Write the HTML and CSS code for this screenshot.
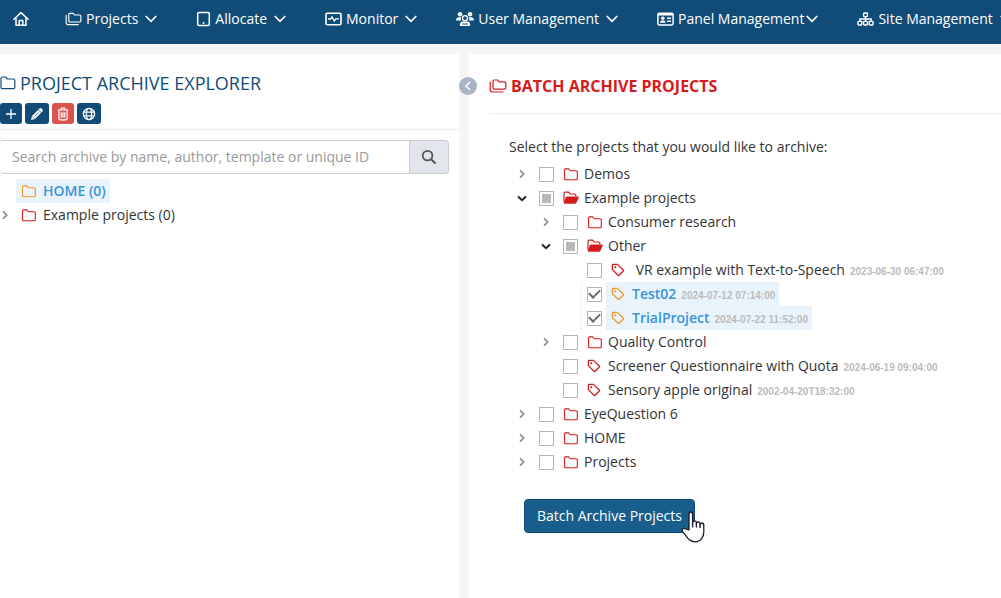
FILE: index.html
```
<!DOCTYPE html>
<html lang="en">
<head>
  <meta charset="UTF-8" />
  <meta name="viewport" content="width=device-width, initial-scale=1.0" />
  <title>Project Archive Explorer</title>
  <link rel="stylesheet" href="styles.css">
</head>
<body>

<svg class="sprite" aria-hidden="true">
  <symbol id="folder" viewBox="0 0 16 14">
    <path d="M1 2.2Q1 1 2.2 1H5.6L7.4 3H13.4Q14.8 3 14.8 4.4V11.2Q14.8 12.6 13.4 12.6H2.4Q1 12.6 1 11.2Z" fill="none" stroke="currentColor" stroke-width="1.2"/>
  </symbol>
  <symbol id="folder-open" viewBox="0 0 16 14">
    <path d="M1 11V2.4Q1 1.2 2.2 1.2H5.4L7.2 3H11.6Q12.8 3 12.8 4.2V5.6" fill="none" stroke="currentColor" stroke-width="1.2"/>
    <path d="M4 5.6H15.2Q16 5.6 15.7 6.4L13.6 11.4Q13 12.8 11.6 12.8H1.6Q.6 12.8 .9 11.8L2.6 6.8Q3 5.6 4 5.6Z" fill="currentColor"/>
  </symbol>
  <symbol id="folders" viewBox="0 0 18 14">
    <path d="M4 2.2Q4 1 5.2 1H8.6L10.2 2.8H15.4Q16.8 2.8 16.8 4.2V8.8Q16.8 10.2 15.4 10.2H5.4Q4 10.2 4 8.8Z" fill="none" stroke="currentColor" stroke-width="1.2"/>
    <path d="M1.2 3V10.6Q1.2 13 3.6 13H14" fill="none" stroke="currentColor" stroke-width="1.2" stroke-linecap="round"/>
  </symbol>
  <symbol id="tag" viewBox="0 0 14 14">
    <path d="M1.4 2.2Q1.4 1.4 2.2 1.4H6.4L12.2 7Q12.8 7.6 12.2 8.2L8.2 12.2Q7.6 12.8 7 12.2L1.4 6.6Z" fill="none" stroke="currentColor" stroke-width="1.3" stroke-linejoin="round"/>
    <circle cx="4.3" cy="4.3" r="1" fill="currentColor"/>
  </symbol>
  <symbol id="right" viewBox="0 0 8 10">
    <path d="M2 1.2L5.8 5L2 8.8" fill="none" stroke="currentColor" stroke-width="1.6"/>
  </symbol>
  <symbol id="down" viewBox="0 0 12 8">
    <path d="M1.2 1.5L6 6.3L10.8 1.5" fill="none" stroke="currentColor" stroke-width="1.7" stroke-linecap="round"/>
  </symbol>
  <symbol id="down-bold" viewBox="0 0 10 7">
    <path d="M1 1.4L5 5.2L9 1.4" fill="none" stroke="currentColor" stroke-width="2"/>
  </symbol>
</svg>

<nav class="topbar">
  <a href="#" class="nav-item home" aria-label="Home">
    <svg width="16" height="16" viewBox="0 0 16 16" fill="none" stroke="currentColor" stroke-width="1.5" stroke-linejoin="round" stroke-linecap="round"><path d="M.9 8.2L8 1.6L15.1 8.2M3 7V14.2H13V7M6.2 14V9.4H9.8V14"/></svg>
  </a>
  <a href="#" class="nav-item">
    <svg width="17" height="14"><use href="#folders"/></svg>
    Projects
    <svg class="caret" width="12" height="8"><use href="#down"/></svg>
  </a>
  <a href="#" class="nav-item">
    <svg width="15" height="16" viewBox="0 0 15 16"><rect x="1.7" y="1.5" width="11.6" height="13" rx="1.3" fill="none" stroke="currentColor" stroke-width="1.5"/><circle cx="7.5" cy="12" r="1" fill="currentColor"/></svg>
    Allocate
    <svg class="caret" width="12" height="8"><use href="#down"/></svg>
  </a>
  <a href="#" class="nav-item">
    <svg width="17" height="14" viewBox="0 0 17 14" fill="none" stroke="currentColor"><rect x="1" y="1.2" width="15" height="11.6" rx="1.2" stroke-width="1.6"/><path d="M3 7H5.6L7 4.8L9.2 9L10.8 6.8H14" stroke-width="1.3"/></svg>
    Monitor
    <svg class="caret" width="12" height="8"><use href="#down"/></svg>
  </a>
  <a href="#" class="nav-item">
    <svg width="18" height="16" viewBox="0 0 18 16" fill="currentColor"><circle cx="4" cy="3.2" r="2.3"/><circle cx="14" cy="3.2" r="2.3"/><path d="M0 9.4Q.2 6.2 3 6.2H5.2Q4 8 5.2 9.4ZM18 9.4Q17.8 6.2 15 6.2H12.8Q14 8 12.8 9.4Z"/><circle cx="9" cy="7.2" r="2.5" fill="none" stroke="currentColor" stroke-width="1.3"/><path d="M3.8 14.9Q3.6 10.6 7 10.6H11Q14.4 10.6 14.2 14.9Z"/><path d="M6.2 13H11.8" stroke="#114c78"/></svg>
    User Management
    <svg class="caret" width="12" height="8"><use href="#down"/></svg>
  </a>
  <a href="#" class="nav-item tight">
    <svg width="17" height="14" viewBox="0 0 17 14"><rect x=".9" y="1.2" width="15.2" height="11.8" rx="1.4" fill="none" stroke="currentColor" stroke-width="1.5"/><path d="M1 1H16V3.6H1ZM3 10.8Q3 8.4 5 8.4H6.8Q8.6 8.4 8.6 10.8Z" fill="currentColor"/><circle cx="5.8" cy="6.2" r="1.8" fill="currentColor"/><path d="M10 6.2H14M10 9.2H14" stroke="currentColor" stroke-width="1.6"/></svg>
    Panel Management
    <svg class="caret" width="12" height="8"><use href="#down"/></svg>
  </a>
  <a href="#" class="nav-item">
    <svg width="17" height="14" viewBox="0 0 17 14" fill="none" stroke="currentColor" stroke-width="1.4"><rect x="6.6" y="1" width="3.8" height="3.6" rx=".7"/><rect x="1" y="9.4" width="3.8" height="3.6" rx=".7"/><rect x="6.6" y="9.4" width="3.8" height="3.6" rx=".7"/><rect x="12.2" y="9.4" width="3.8" height="3.6" rx=".7"/><path d="M8.5 4.6V9.4M2.9 9.4V7H14.1V9.4"/></svg>
    Site Management
    <svg class="caret" width="12" height="8"><use href="#down"/></svg>
  </a>
</nav>

<div class="layout">
  <aside class="explorer">
    <h1><svg width="16" height="14"><use href="#folder"/></svg>PROJECT ARCHIVE EXPLORER</h1>
    <div class="tools">
      <button class="tool" aria-label="Add"><svg width="12" height="12" viewBox="0 0 12 12"><path d="M6 1V11M1 6H11" stroke="currentColor" stroke-width="1.3"/></svg></button>
      <button class="tool wide" aria-label="Edit"><svg width="14" height="14" viewBox="0 0 14 14"><path d="M1 13L2 9L9.6 1.4Q10.6.6 11.6 1.6L12.4 2.4Q13.4 3.4 12.4 4.4L5 12Z" fill="currentColor"/><path d="M8.4 2.8L11.2 5.6M4.5 9.5L8.6 5.4M2.3 9.6L4.4 11.7" stroke="#114c78" stroke-width=".8"/></svg></button>
      <button class="tool danger" aria-label="Delete"><svg width="12" height="14" viewBox="0 0 12 14" fill="none" stroke="currentColor" stroke-width="1.2"><path d="M.8 3H11.2M3.6 2.8L4.4 1.2H7.6L8.4 2.8M1.9 3.2V11.2Q1.9 12.8 3.4 12.8H8.6Q10.1 12.8 10.1 11.2V3.2M4.2 5.2V10.8M6 5.2V10.8M7.8 5.2V10.8"/></svg></button>
      <button class="tool wide" aria-label="Language"><svg width="14" height="14" viewBox="0 0 14 14" fill="none" stroke="currentColor" stroke-width="1.3"><circle cx="7" cy="7" r="5.6"/><ellipse cx="7" cy="7" rx="2.6" ry="5.6"/><path d="M1.8 5.2H12.2M1.8 8.8H12.2"/></svg></button>
    </div>
    <form class="search">
      <input type="text" aria-label="Search archive" placeholder="Search archive by name, author, template or unique ID">
      <button type="button" aria-label="Search"><svg width="16" height="16" viewBox="0 0 16 16"><circle cx="6.6" cy="6.6" r="4.8" fill="none" stroke="currentColor" stroke-width="1.8"/><path d="M10.2 10.2L14.6 14.6" stroke="currentColor" stroke-width="2"/></svg></button>
    </form>
    <ul class="folders">
      <li><span class="toggle"></span><a href="#" class="node selected"><svg width="16" height="13"><use href="#folder"/></svg>HOME (0)</a></li>
      <li><button class="toggle" aria-label="Expand"><svg width="8" height="10"><use href="#right"/></svg></button><a href="#" class="node"><svg width="16" height="13"><use href="#folder"/></svg>Example projects (0)</a></li>
    </ul>
  </aside>

  <div class="divider">
    <button class="collapse" aria-label="Collapse"><svg width="8" height="10" viewBox="0 0 8 10"><path d="M6 1L2 5L6 9" fill="none" stroke="currentColor" stroke-width="1.6"/></svg></button>
  </div>

  <main class="batch">
    <h2><svg width="18" height="14"><use href="#folders"/></svg>BATCH ARCHIVE PROJECTS</h2>
    <div class="content">
      <p>Select the projects that you would like to archive:</p>
      <ul class="tree">
        <li>
          <div class="row"><button class="toggle" aria-label="Expand"><svg width="8" height="10"><use href="#right"/></svg></button><span class="check"><input type="checkbox" id="p1"></span><label class="node" for="p1"><svg width="16" height="13"><use href="#folder"/></svg>Demos</label></div>
        </li>
        <li>
          <div class="row"><button class="toggle open" aria-label="Collapse"><svg width="10" height="7"><use href="#down-bold"/></svg></button><span class="check"><input type="checkbox" id="p2" class="partial"></span><label class="node" for="p2"><svg width="16" height="14"><use href="#folder-open"/></svg>Example projects</label></div>
          <ul>
            <li>
              <div class="row"><button class="toggle" aria-label="Expand"><svg width="8" height="10"><use href="#right"/></svg></button><span class="check"><input type="checkbox" id="p3"></span><label class="node" for="p3"><svg width="16" height="13"><use href="#folder"/></svg>Consumer research</label></div>
            </li>
            <li>
              <div class="row"><button class="toggle open" aria-label="Collapse"><svg width="10" height="7"><use href="#down-bold"/></svg></button><span class="check"><input type="checkbox" id="p4" class="partial"></span><label class="node" for="p4"><svg width="16" height="14"><use href="#folder-open"/></svg>Other</label></div>
              <ul>
                <li><div class="row"><span class="toggle"></span><span class="check"><input type="checkbox" id="p5"></span><label class="node" for="p5"><svg class="tag" width="14" height="14"><use href="#tag"/></svg>&nbsp;VR example with Text-to-Speech<time>2023-06-30 06:47:00</time></label></div></li>
                <li><div class="row picked"><span class="toggle"></span><span class="check"><input type="checkbox" id="p6" checked></span><label class="node selected" for="p6"><svg class="tag" width="14" height="14"><use href="#tag"/></svg>Test02<time>2024-07-12 07:14:00</time></label></div></li>
                <li><div class="row picked"><span class="toggle"></span><span class="check"><input type="checkbox" id="p7" checked></span><label class="node selected" for="p7"><svg class="tag" width="14" height="14"><use href="#tag"/></svg>TrialProject<time>2024-07-22 11:52:00</time></label></div></li>
              </ul>
            </li>
            <li>
              <div class="row"><button class="toggle" aria-label="Expand"><svg width="8" height="10"><use href="#right"/></svg></button><span class="check"><input type="checkbox" id="p8"></span><label class="node" for="p8"><svg width="16" height="13"><use href="#folder"/></svg>Quality Control</label></div>
            </li>
            <li><div class="row"><span class="toggle"></span><span class="check"><input type="checkbox" id="p9"></span><label class="node" for="p9"><svg class="tag" width="14" height="14"><use href="#tag"/></svg>Screener Questionnaire with Quota<time>2024-06-19 09:04:00</time></label></div></li>
            <li><div class="row"><span class="toggle"></span><span class="check"><input type="checkbox" id="p10"></span><label class="node" for="p10"><svg class="tag" width="14" height="14"><use href="#tag"/></svg>Sensory apple original<time>2002-04-20T18:32:00</time></label></div></li>
          </ul>
        </li>
        <li>
          <div class="row"><button class="toggle" aria-label="Expand"><svg width="8" height="10"><use href="#right"/></svg></button><span class="check"><input type="checkbox" id="p11"></span><label class="node" for="p11"><svg width="16" height="13"><use href="#folder"/></svg>EyeQuestion 6</label></div>
        </li>
        <li>
          <div class="row"><button class="toggle" aria-label="Expand"><svg width="8" height="10"><use href="#right"/></svg></button><span class="check"><input type="checkbox" id="p12"></span><label class="node" for="p12"><svg width="16" height="13"><use href="#folder"/></svg>HOME</label></div>
        </li>
        <li>
          <div class="row"><button class="toggle" aria-label="Expand"><svg width="8" height="10"><use href="#right"/></svg></button><span class="check"><input type="checkbox" id="p13"></span><label class="node" for="p13"><svg width="16" height="13"><use href="#folder"/></svg>Projects</label></div>
        </li>
      </ul>
      <div class="action">
        <button class="submit">Batch Archive Projects</button>
        <svg class="pointer" width="24" height="32" viewBox="0 0 24 32"><path d="M8 19V3.2Q8 1 9.8 1T11.6 3.2V12Q11.8 9.8 13.6 9.8T15.4 12V13Q15.6 10.8 17.3 10.8T19.1 13V14Q19.4 12 21 12T22.8 14.4V21Q22.8 25 20.6 27.6Q18.2 30.8 14 30.8Q10 30.8 7.2 27.6L1.6 20.6Q.4 18.8 1.6 17.8Q3 16.8 4.6 18Z" fill="#fff" stroke="#1b1b2b" stroke-width="1.3" stroke-linejoin="round"/><path d="M11.6 11V16.5M15.4 12V16.5M19.1 13V17" stroke="#1b1b2b" stroke-width="1.3"/></svg>
      </div>
    </div>
  </main>
</div>

<script>
  document.querySelectorAll('.partial').forEach(box => {
    box.indeterminate = true;
  });
</script>

</body>
</html>
```
FILE: styles.css
```
:root {
  --blue: #114c78;
  --red: #d71a1a;
  --orange: #f7941d;
  --link: #3a94dc;
  --pick: #e9f3fc;
  --grey: #f5f5f5;
}
* { box-sizing: border-box; }
body {
  margin: 0;
  min-height: 100vh;
  display: flex;
  flex-direction: column;
  font-family: "Open Sans", sans-serif;
  font-size: 14px;
  line-height: 24px;
  color: #333;
  background: #fff;
}
button, input {
  font: inherit;
  margin: 0;
}
button {
  padding: 0;
  border: 0;
  background: none;
  cursor: pointer;
}
svg { flex: none; }
ul {
  list-style: none;
  margin: 0;
  padding: 0;
}
.sprite {
  position: absolute;
  width: 0;
  height: 0;
}

.topbar {
  display: flex;
  gap: 39px;
  height: 44px;
  padding: 7px 0 0 13px;
  overflow: hidden;
  white-space: nowrap;
  background: var(--blue);
}
.nav-item {
  display: flex;
  align-items: center;
  gap: 4px;
  height: 24px;
  color: #fff;
  text-decoration: none;
}
.home { margin-right: -3px; }
.caret { margin-left: 3px; }
.tight .caret { margin-left: -2px; }

.layout {
  flex: 1;
  display: grid;
  grid-template-columns: 459px 10px minmax(0, 1fr);
  border-top: 10px solid var(--grey);
}

.explorer { padding-top: 16px; }
h1 {
  display: flex;
  align-items: center;
  gap: 4px;
  margin: 0;
  font-size: 18px;
  font-weight: 400;
  line-height: 26px;
  color: var(--blue);
}
.tools {
  display: flex;
  gap: 3px;
  padding: 7px 0 5px;
  border-bottom: 1px solid #e9e9e9;
}
.tool {
  display: flex;
  align-items: center;
  justify-content: center;
  width: 22px;
  height: 21px;
  border-radius: 3px;
  color: #fff;
  background: var(--blue);
}
.wide { width: 24px; }
.danger { background: #d9534f; }
.search {
  display: flex;
  height: 34px;
  margin: 10px 10px 5px 0;
}
.search input {
  flex: 1;
  min-width: 0;
  padding: 0 12px;
  border: 1px solid #ccc;
  border-left: 0;
  border-radius: 4px 0 0 4px;
  color: #555;
}
.search input::placeholder { color: #999; }
.search button {
  display: flex;
  align-items: center;
  justify-content: center;
  width: 39px;
  border: 1px solid #ccc;
  border-left: 0;
  border-radius: 0 4px 4px 0;
  color: #555;
  background: #e1e6ed;
}
.folders li { display: flex; }
.folders .toggle {
  width: 16px;
  padding-right: 7px;
}

.divider {
  display: flex;
  background: var(--grey);
}
.collapse {
  display: flex;
  align-items: center;
  justify-content: center;
  flex: none;
  width: 18px;
  height: 18px;
  margin-top: 23px;
  border-radius: 50%;
  color: #fff;
  background: #a9b4c4;
  z-index: 1;
}

.batch { padding: 20px 0 20px 20px; }
h2 {
  display: flex;
  align-items: center;
  gap: 4px;
  margin: 0;
  padding-bottom: 15px;
  border-bottom: 1px solid #ebebeb;
  font-size: 16px;
  font-weight: 700;
  line-height: 24px;
  color: var(--red);
}
.content { padding: 21px 20px 0; }
.content p {
  margin: 0;
  padding-bottom: 3px;
}
.tree ul { padding-left: 24px; }
.row {
  display: flex;
  height: 24px;
  white-space: nowrap;
}
.toggle {
  display: flex;
  align-items: center;
  justify-content: center;
  flex: none;
  width: 24px;
  height: 24px;
  color: #858585;
}
.tree .toggle { padding-left: 1px; }
.toggle.open { color: #222; }
.check {
  display: flex;
  align-items: center;
  width: 25px;
  padding-left: 5px;
  border-left: 1px solid transparent;
}
.picked .check { border-left-color: var(--pick); }
.check input {
  appearance: none;
  display: grid;
  place-items: center;
  width: 15px;
  height: 15px;
  border: 1px solid #b5b5b5;
  background: #fff;
}
.check input:indeterminate::before {
  content: "";
  width: 9px;
  height: 9px;
  background: #b8b8b8;
}
.check input:checked::before {
  content: "";
  width: 9px;
  height: 5px;
  margin-bottom: 3px;
  border: solid #666;
  border-width: 0 0 2px 2px;
  transform: rotate(-45deg);
}
.node {
  display: flex;
  align-items: center;
  padding: 0 4px 0 5px;
  color: #333;
  text-decoration: none;
}
.node svg {
  margin-right: 5px;
  color: var(--red);
}
.folders .node svg { margin-right: 6px; }
.node .tag { margin-right: 7px; }
.selected {
  font-weight: 600;
  color: var(--link);
  background: var(--pick);
}
.selected svg { color: var(--orange); }
time {
  margin-left: 5px;
  padding-top: 3px;
  font: bold 10px "Liberation Sans", sans-serif;
  color: #bbb;
}

.action {
  position: relative;
  width: fit-content;
  margin: 25px 0 0 15px;
}
.submit {
  height: 34px;
  padding: 0 12px;
  border: 1px solid #114c78;
  border-radius: 4px;
  color: #fff;
  background: #175e8d;
}
.pointer {
  position: absolute;
  right: -10px;
  bottom: -10px;
}
```
